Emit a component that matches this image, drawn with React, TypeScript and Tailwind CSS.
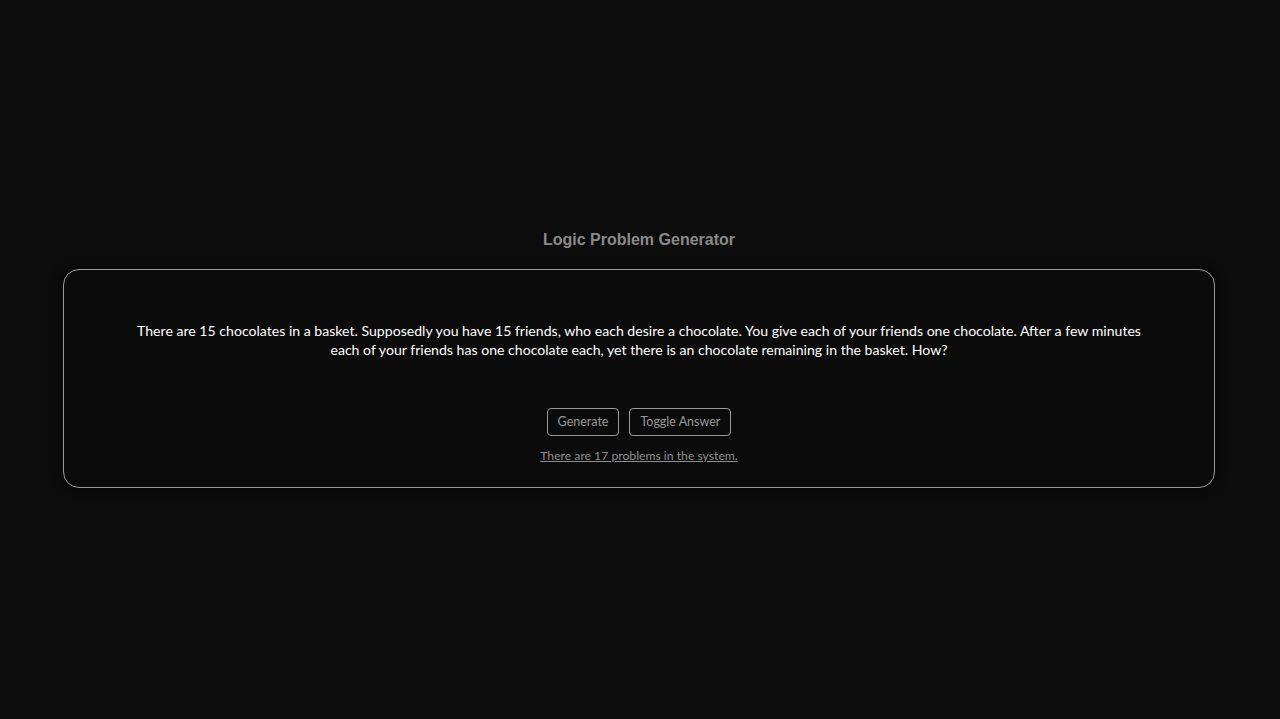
export default function App() {
  return (
    <div className="min-h-screen bg-[#0c0c0c] flex flex-col items-center pt-[229px] pl-[63px] pr-[65px]" style={{ fontFamily: 'Lato, "Noto Sans", sans-serif' }}>
      <h1 className="text-[16px] font-bold leading-[22px] text-[#8a8a8a]" style={{ fontFamily: '"Liberation Sans", Arial, sans-serif' }}>
        Logic Problem Generator
      </h1>
      <div className="mt-[18px] w-full rounded-[16px] border border-[#9a9a9a] bg-[#0b0b0b] shadow-[0_0_12px_rgba(0,0,0,0.6)] flex flex-col items-center pt-[51px] pb-[24px] px-[70px]">
        <p className="text-center text-[14.1px] leading-[19px] text-white max-w-[1012px]">
          There are 15 chocolates in a basket. Supposedly you have 15 friends, who each desire a chocolate. You give each of your friends one chocolate. After a few minutes each of your friends has one chocolate each, yet there is an chocolate remaining in the basket. How?
        </p>
        <div className="mt-[49px] flex gap-[10px]">
          <button className="h-[28px] px-[10px] rounded-[4px] border border-[#9a9a9a] text-[12.5px] text-[#9a9a9a]">Generate</button>
          <button className="h-[28px] px-[10px] rounded-[4px] border border-[#9a9a9a] text-[12.5px] text-[#9a9a9a]">Toggle Answer</button>
        </div>
        <a className="mt-[12px] text-[12.2px] leading-[15px] text-[#8f8f8f] underline">There are 17 problems in the system.</a>
      </div>
    </div>
  );
}
